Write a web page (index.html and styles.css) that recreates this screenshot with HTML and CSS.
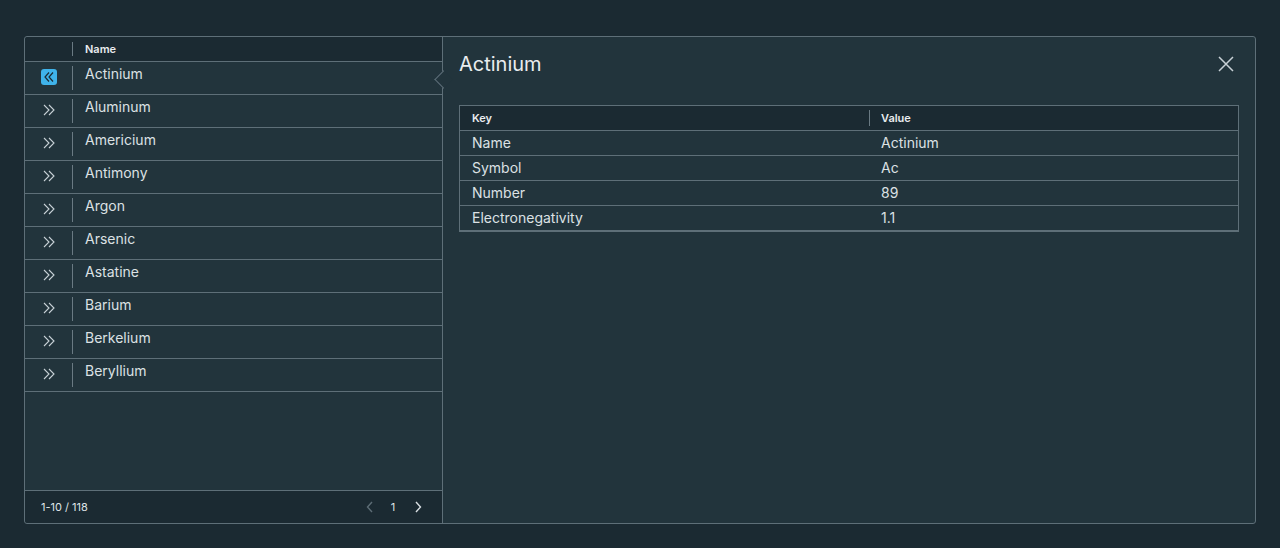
FILE: index.html
```html
<!DOCTYPE html>
<html>
<head>
<meta charset="utf-8">
<link rel="stylesheet" href="styles.css">
</head>
<body>
<div class="grid">
  <div class="master">
    <div class="head">
      <div class="c-exp"></div>
      <div class="c-name"><span class="sep"></span>Name</div>
    </div>
    <div class="rows">
      <div class="row">
        <div class="c-exp"><span class="btn active"><svg width="16" height="16" viewBox="0 0 16 16"><path d="M8 3.5 L4 8 L8 12.5 M12 3.5 L8 8 L12 12.5" fill="none" stroke="#1b2a32" stroke-width="1.2"/></svg></span></div>
        <div class="c-name"><span class="sep"></span>Actinium</div>
      </div>
      <div class="row"><div class="c-exp"><span class="btn"><svg width="16" height="16" viewBox="0 0 16 16"><path d="M3 3 L8 8 L3 13 M8 3 L13 8 L8 13" fill="none" stroke="#c8d1d6" stroke-width="1.1"/></svg></span></div><div class="c-name"><span class="sep"></span>Aluminum</div></div>
      <div class="row"><div class="c-exp"><span class="btn"><svg width="16" height="16" viewBox="0 0 16 16"><path d="M3 3 L8 8 L3 13 M8 3 L13 8 L8 13" fill="none" stroke="#c8d1d6" stroke-width="1.1"/></svg></span></div><div class="c-name"><span class="sep"></span>Americium</div></div>
      <div class="row"><div class="c-exp"><span class="btn"><svg width="16" height="16" viewBox="0 0 16 16"><path d="M3 3 L8 8 L3 13 M8 3 L13 8 L8 13" fill="none" stroke="#c8d1d6" stroke-width="1.1"/></svg></span></div><div class="c-name"><span class="sep"></span>Antimony</div></div>
      <div class="row"><div class="c-exp"><span class="btn"><svg width="16" height="16" viewBox="0 0 16 16"><path d="M3 3 L8 8 L3 13 M8 3 L13 8 L8 13" fill="none" stroke="#c8d1d6" stroke-width="1.1"/></svg></span></div><div class="c-name"><span class="sep"></span>Argon</div></div>
      <div class="row"><div class="c-exp"><span class="btn"><svg width="16" height="16" viewBox="0 0 16 16"><path d="M3 3 L8 8 L3 13 M8 3 L13 8 L8 13" fill="none" stroke="#c8d1d6" stroke-width="1.1"/></svg></span></div><div class="c-name"><span class="sep"></span>Arsenic</div></div>
      <div class="row"><div class="c-exp"><span class="btn"><svg width="16" height="16" viewBox="0 0 16 16"><path d="M3 3 L8 8 L3 13 M8 3 L13 8 L8 13" fill="none" stroke="#c8d1d6" stroke-width="1.1"/></svg></span></div><div class="c-name"><span class="sep"></span>Astatine</div></div>
      <div class="row"><div class="c-exp"><span class="btn"><svg width="16" height="16" viewBox="0 0 16 16"><path d="M3 3 L8 8 L3 13 M8 3 L13 8 L8 13" fill="none" stroke="#c8d1d6" stroke-width="1.1"/></svg></span></div><div class="c-name"><span class="sep"></span>Barium</div></div>
      <div class="row"><div class="c-exp"><span class="btn"><svg width="16" height="16" viewBox="0 0 16 16"><path d="M3 3 L8 8 L3 13 M8 3 L13 8 L8 13" fill="none" stroke="#c8d1d6" stroke-width="1.1"/></svg></span></div><div class="c-name"><span class="sep"></span>Berkelium</div></div>
      <div class="row"><div class="c-exp"><span class="btn"><svg width="16" height="16" viewBox="0 0 16 16"><path d="M3 3 L8 8 L3 13 M8 3 L13 8 L8 13" fill="none" stroke="#c8d1d6" stroke-width="1.1"/></svg></span></div><div class="c-name"><span class="sep"></span>Beryllium</div></div>
    </div>
    <div class="footer">
      <span class="count">1-10 / 118</span>
      <div class="pager">
        <svg class="prev" width="12" height="14" viewBox="0 0 12 14"><path d="M8 2 L3.5 7 L8 12" fill="none" stroke="#5d6d76" stroke-width="1.4"/></svg>
        <span class="page">1</span>
        <svg class="next" width="12" height="14" viewBox="0 0 12 14"><path d="M4 2 L8.5 7 L4 12" fill="none" stroke="#d8dee2" stroke-width="1.4"/></svg>
      </div>
    </div>
  </div>
  <div class="detail">
    <span class="caret"></span>
    <div class="d-head">
      <h2 class="title">Actinium</h2>
      <svg class="close" width="18" height="18" viewBox="0 0 18 18"><path d="M2 2 L16 16 M16 2 L2 16" fill="none" stroke="#c8d1d6" stroke-width="1.5"/></svg>
    </div>
    <div class="kv">
      <div class="kv-head"><div class="k">Key</div><div class="v"><span class="vsep"></span>Value</div></div>
      <div class="kv-row"><div class="k">Name</div><div class="v">Actinium</div></div>
      <div class="kv-row"><div class="k">Symbol</div><div class="v">Ac</div></div>
      <div class="kv-row"><div class="k">Number</div><div class="v">89</div></div>
      <div class="kv-row"><div class="k">Electronegativity</div><div class="v">1.1</div></div>
    </div>
  </div>
</div>
</body>
</html>
```
FILE: styles.css
```css
html, body {
  margin: 0;
  padding: 0;
  background: #1b2a32;
  font-family: Inter, "Noto Sans", sans-serif;
  color: #dce1e4;
}
body {
  padding: 36px 24px 0 24px;
}
.grid {
  display: flex;
  height: 488px;
  box-sizing: border-box;
  border: 1px solid #5e6f78;
  border-radius: 3px;
  background: #22343c;
}
.master {
  width: 417px;
  flex: none;
  display: flex;
  flex-direction: column;
  border-right: 1px solid #5e6f78;
}
.head {
  display: flex;
  height: 24px;
  background: #1b2a32;
  border-bottom: 1px solid #5e6f78;
  border-top-left-radius: 3px;
  font-size: 11px;
  font-weight: 600;
  color: #e9ecef;
}
.c-exp {
  width: 47px;
  flex: none;
  display: flex;
  justify-content: center;
  align-items: flex-start;
}
.c-name {
  position: relative;
  flex: 1;
  padding-left: 13px;
}
.head .c-name {
  line-height: 24px;
}
.sep {
  position: absolute;
  left: 0;
  top: 5px;
  bottom: 5px;
  width: 1px;
  background: #6a7a83;
}
.row {
  display: flex;
  height: 32px;
  border-bottom: 1px solid #5e6f78;
  font-size: 14px;
}
.row .c-name {
  padding-top: 3px;
  line-height: 17px;
}
.row .sep {
  top: 4px;
  bottom: 4px;
}
.btn {
  display: flex;
  width: 16px;
  height: 16px;
  margin-top: 7px;
  margin-left: 1px;
  border-radius: 3px;
}
.btn.active {
  background: #3fb3ea;
}
.rows {
  flex: 1;
}
.footer {
  height: 32px;
  border-top: 1px solid #5e6f78;
  background: #1b2a32;
  border-bottom-left-radius: 3px;
  display: flex;
  align-items: center;
  justify-content: space-between;
  padding: 0 18px 0 16px;
  font-size: 11px;
  color: #dfe4e7;
}
.pager {
  display: flex;
  align-items: center;
}
.prev {
  margin-right: -2px;
}
.page {
  width: 38px;
  text-align: center;
}
.detail {
  position: relative;
  flex: 1;
  padding: 0 16px;
}
.caret {
  position: absolute;
  left: -6.5px;
  top: 36px;
  width: 12px;
  height: 12px;
  background: #22343c;
  border-left: 1px solid #5e6f78;
  border-bottom: 1px solid #5e6f78;
  transform: rotate(45deg);
}
.d-head {
  display: flex;
  align-items: center;
  justify-content: space-between;
  height: 54px;
}
.title {
  margin: 0;
  font-size: 20px;
  font-weight: 400;
  color: #e9ecef;
}
.close {
  margin-right: 4px;
}
.kv {
  margin-top: 14px;
  border: 1px solid #5e6f78;
  border-bottom-width: 2px;
  font-size: 14px;
}
.kv-head {
  display: flex;
  height: 24px;
  background: #1b2a32;
  border-bottom: 1px solid #5e6f78;
  font-size: 11px;
  font-weight: 600;
  line-height: 24px;
  color: #e9ecef;
}
.kv-row {
  display: flex;
  height: 24px;
  line-height: 24px;
  border-bottom: 1px solid #5e6f78;
}
.kv-row:last-child {
  border-bottom: none;
}
.k {
  width: 397px;
  padding-left: 12px;
  flex: none;
}
.v {
  position: relative;
  flex: 1;
  padding-left: 12px;
}
.vsep {
  position: absolute;
  left: 0;
  top: 4px;
  bottom: 4px;
  width: 1px;
  background: #6a7a83;
}
```
